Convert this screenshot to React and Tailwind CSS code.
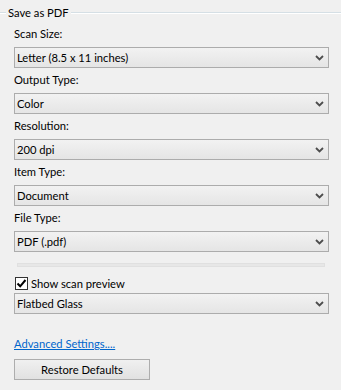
const Chevron = () => (
  <svg width="9" height="6" viewBox="0 0 9 6" className="absolute right-[4px] top-1/2 -translate-y-1/2">
    <path d="M1 1 L4.5 4.5 L8 1" fill="none" stroke="#4d4d4d" strokeWidth="1.8" />
  </svg>
);

const Combo = ({ value }) => (
  <div className="relative h-[21px] w-[315px] border border-[#acacac] bg-gradient-to-b from-[#f2f2f2] to-[#e5e5e5] pl-[2px] text-[11.2px] leading-[19px] text-black">
    {value}
    <Chevron />
  </div>
);

const Field = ({ label, value }) => (
  <div className="flex flex-col">
    <div className="h-[16px] text-[11.2px] leading-[16px]">{label}</div>
    <div className="mt-[5px]">
      <Combo value={value} />
    </div>
  </div>
);

export default function App() {
  return (
    <div
      className="relative h-[390px] w-[341px] overflow-hidden bg-[#f0f0f0] text-black"
      style={{ fontFamily: 'Lato, "Segoe UI", sans-serif' }}
    >
      <div className="mt-[5px] flex h-[16px] items-center">
        <div className="h-[2px] w-[6px] border-t border-b border-t-[#d5dfe5] border-b-white" />
        <span className="px-[2px] text-[11.2px] leading-[16px]">Save as PDF</span>
        <div className="h-[2px] flex-1 border-t border-b border-t-[#d5dfe5] border-b-white" />
      </div>

      <div className="mt-[5px] flex flex-col gap-[4px] pl-[14px]">
        <Field label="Scan Size:" value="Letter (8.5 x 11 inches)" />
        <Field label="Output Type:" value="Color" />
        <Field label="Resolution:" value="200 dpi" />
        <Field label="Item Type:" value="Document" />
        <Field label="File Type:" value="PDF (.pdf)" />
      </div>

      <div className="ml-[17px] mt-[11px] h-[4px] w-[308px] border border-[#e0e0e0] bg-[#e7e7e7]" />

      <div className="ml-[15px] mt-[9px] flex h-[15px] items-center gap-[3px]">
        <div className="flex h-[13px] w-[13px] items-center justify-center border border-[#333] bg-white">
          <svg width="11" height="11" viewBox="0 0 11 11">
            <path d="M1.5 5.5 L4.2 8.3 L9.5 2" fill="none" stroke="#000" strokeWidth="2" />
          </svg>
        </div>
        <span className="text-[11.2px] leading-[15px]">Show scan preview</span>
      </div>

      <div className="ml-[14px] mt-[2px]">
        <Combo value="Flatbed Glass" />
      </div>

      <div className="ml-[14px] mt-[22px] h-[16px] text-[11.2px] leading-[16px] text-[#0066cc] underline">
        Advanced Settings....
      </div>

      <button className="ml-[14px] mt-[7px] h-[21px] w-[136px] border border-[#adadad] bg-gradient-to-b from-[#f0f0f0] to-[#e1e1e1] text-[11.2px] leading-[19px] text-black">
        Restore Defaults
      </button>
    </div>
  );
}
